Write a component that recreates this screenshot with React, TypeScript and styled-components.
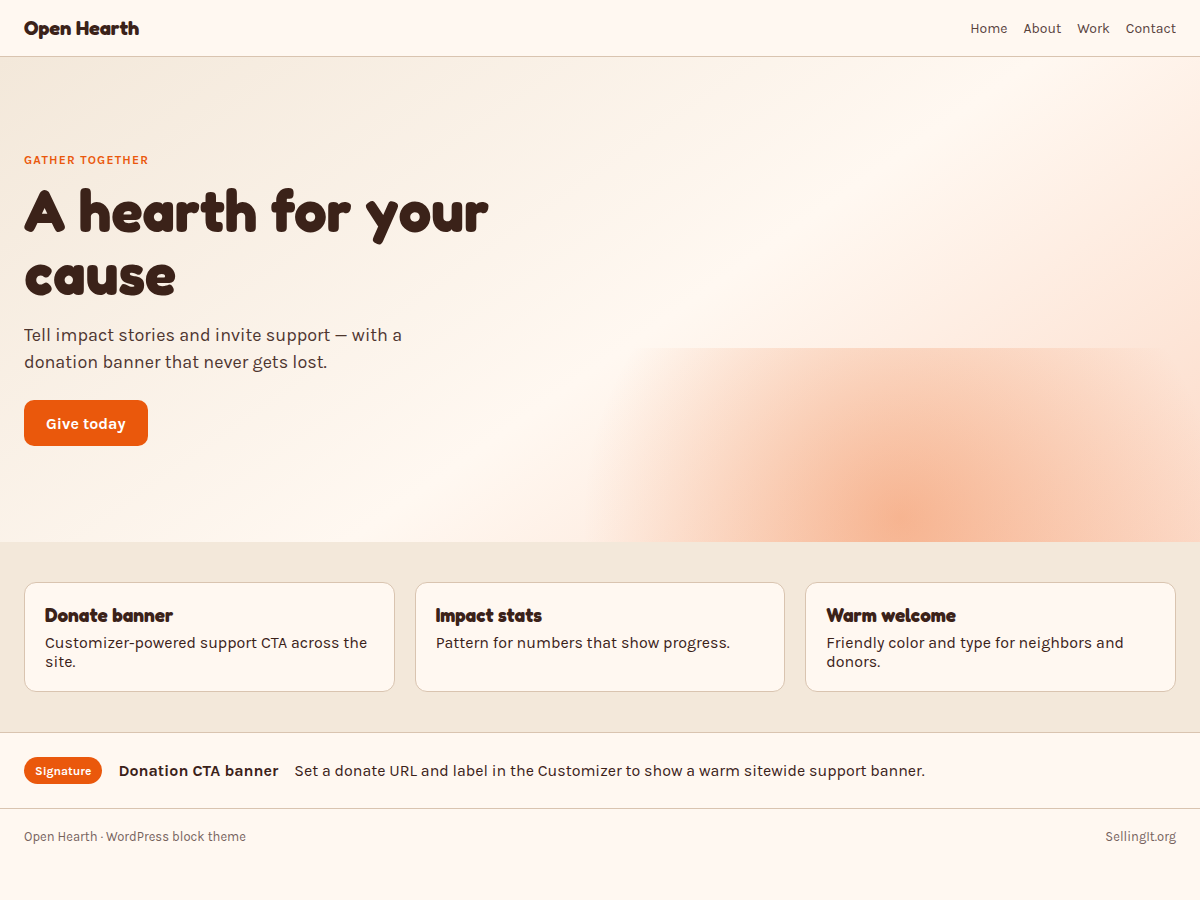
import React from "react";
import styled, { createGlobalStyle, ThemeProvider } from "styled-components";

const theme = {
  cream: "#fff8f1",
  sand: "#f3e8da",
  line: "#d9c4b0",
  ink: "#3b2219",
  ember: "#ea580c",
  blush: "#fcdac8",
  heading: '"Fredoka", "Karla", sans-serif',
  body: '"Karla", "Liberation Sans", sans-serif',
};

const GlobalStyle = createGlobalStyle`
  *, *::before, *::after { box-sizing: border-box; }
  body {
    margin: 0;
    background: ${theme.cream};
    color: ${theme.ink};
    font-family: ${theme.body};
    font-size: 16px;
    line-height: 19px;
  }
  h1, h2, p { margin: 0; }
`;

const Header = styled.header`
  display: flex;
  align-items: center;
  justify-content: space-between;
  gap: 16px;
  padding: 16px 24px;
  border-bottom: 1px solid ${(p) => p.theme.line};
`;

const Brand = styled.a`
  font-family: ${(p) => p.theme.heading};
  font-size: 20px;
  font-weight: 700;
  line-height: 24px;
  color: inherit;
  text-decoration: none;
`;

const Nav = styled.nav`
  display: flex;
  gap: 16px;
`;

const NavLink = styled.a`
  font-size: 14px;
  line-height: 17px;
  color: inherit;
  opacity: 0.85;
  text-decoration: none;
`;

const Hero = styled.section`
  position: relative;
  overflow: hidden;
  padding: 96px 24px;
  background: linear-gradient(
    145deg,
    ${(p) => p.theme.sand} 0%,
    ${(p) => p.theme.cream} 55%,
    ${(p) => p.theme.blush} 100%
  );

  &::after {
    content: "";
    position: absolute;
    inset: 60% -10% -30% 40%;
    background: radial-gradient(circle, ${(p) => p.theme.ember}, transparent 70%);
    opacity: 0.35;
  }
`;

const HeroContent = styled.div`
  position: relative;
  z-index: 1;
  display: flex;
  flex-direction: column;
  align-items: flex-start;
  max-width: 540px;
`;

const Eyebrow = styled.p`
  margin-bottom: 12px;
  font-size: 12px;
  font-weight: 700;
  line-height: 14px;
  letter-spacing: 0.1em;
  text-transform: uppercase;
  color: ${(p) => p.theme.ember};
`;

const Title = styled.h1`
  margin-bottom: 17px;
  font-family: ${(p) => p.theme.heading};
  font-size: 58px;
  font-weight: 700;
  line-height: 63px;
`;

const Lead = styled.p`
  max-width: 420px;
  margin-bottom: 24px;
  font-size: 18px;
  line-height: 27px;
  opacity: 0.9;
`;

const DonateButton = styled.button`
  padding: 14px 22px 13px;
  border: 0;
  border-radius: 10px;
  background: ${(p) => p.theme.ember};
  color: #fff;
  font-family: inherit;
  font-size: 16px;
  font-weight: 700;
  line-height: 19px;
  cursor: pointer;
`;

const Features = styled.section`
  display: grid;
  grid-template-columns: repeat(3, 1fr);
  gap: 20px;
  padding: 40px 24px;
  background: ${(p) => p.theme.sand};
`;

const Card = styled.article`
  padding: 20px;
  border: 1px solid ${(p) => p.theme.line};
  border-radius: 12px;
  background: ${(p) => p.theme.cream};
`;

const CardTitle = styled.h2`
  margin-bottom: 7px;
  font-family: ${(p) => p.theme.heading};
  font-size: 19px;
  font-weight: 700;
  line-height: 23px;
`;

const Strip = styled.section`
  display: flex;
  align-items: center;
  gap: 16px;
  padding: 24px;
  border-top: 1px solid ${(p) => p.theme.line};
`;

const Badge = styled.span`
  padding: 7px 11px 6px;
  border-radius: 999px;
  background: ${(p) => p.theme.ember};
  color: #fff;
  font-size: 12px;
  font-weight: 700;
  line-height: 14px;
`;

const Footer = styled.footer`
  display: flex;
  justify-content: space-between;
  gap: 16px;
  padding: 20px 24px;
  border-top: 1px solid ${(p) => p.theme.line};
  font-size: 13px;
  line-height: 16px;
`;

const FooterText = styled.span`
  opacity: 0.7;
`;

const links = ["Home", "About", "Work", "Contact"];

const features = [
  { title: "Donate banner", text: "Customizer-powered support CTA across the site." },
  { title: "Impact stats", text: "Pattern for numbers that show progress." },
  { title: "Warm welcome", text: "Friendly color and type for neighbors and donors." },
];

export default function App() {
  return (
    <ThemeProvider theme={theme}>
      <GlobalStyle />
      <Header>
        <Brand href="#">Open Hearth</Brand>
        <Nav aria-label="Main">
          {links.map((label) => (
            <NavLink key={label} href={`#${label.toLowerCase()}`}>
              {label}
            </NavLink>
          ))}
        </Nav>
      </Header>
      <main>
        <Hero>
          <HeroContent>
            <Eyebrow>Gather together</Eyebrow>
            <Title>A hearth for your cause</Title>
            <Lead>
              Tell impact stories and invite support — with a donation banner that never gets lost.
            </Lead>
            <DonateButton type="button">Give today</DonateButton>
          </HeroContent>
        </Hero>
        <Features>
          {features.map((feature) => (
            <Card key={feature.title}>
              <CardTitle>{feature.title}</CardTitle>
              <p>{feature.text}</p>
            </Card>
          ))}
        </Features>
        <Strip>
          <Badge>Signature</Badge>
          <strong>Donation CTA banner</strong>
          <span>Set a donate URL and label in the Customizer to show a warm sitewide support banner.</span>
        </Strip>
      </main>
      <Footer>
        <FooterText>Open Hearth · WordPress block theme</FooterText>
        <FooterText>SellingIt.org</FooterText>
      </Footer>
    </ThemeProvider>
  );
}
